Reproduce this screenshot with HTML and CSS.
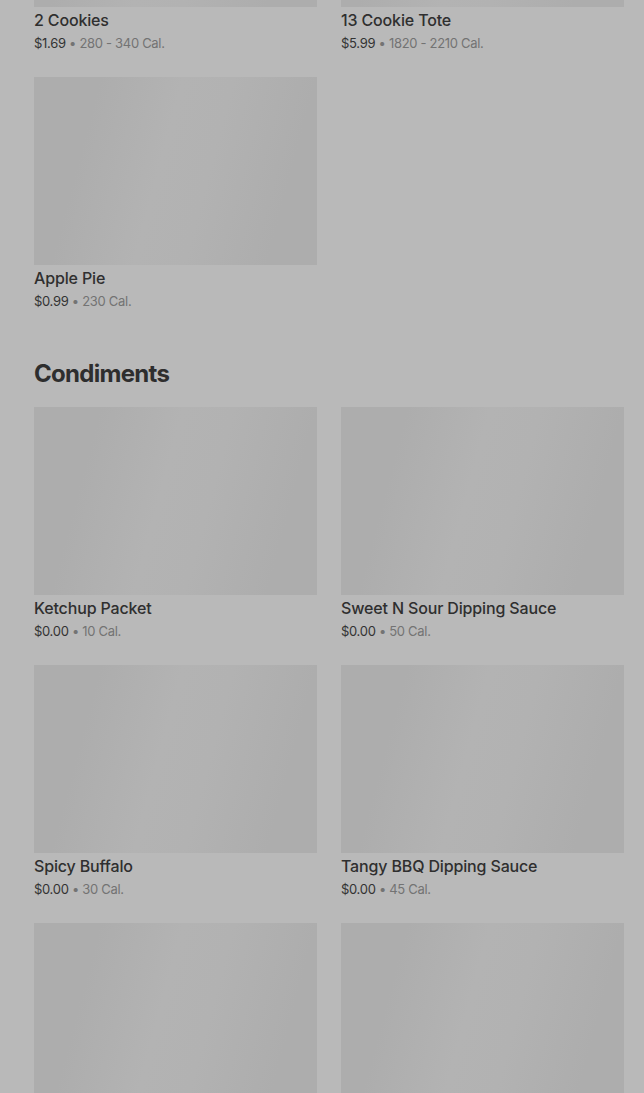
FILE: index.html
```html
<!DOCTYPE html>
<html lang="en">
<head>
    <meta charset="UTF-8">
    <meta name="viewport" content="width=device-width, initial-scale=1.0">
    <title>Menu</title>
    <link rel="stylesheet" href="styles.css">
</head>
<body>

    <div class="menu">
        <!-- デザート -->
        <section class="section">
            <div class="grid">
                <div class="item">
                    <div class="thumb"></div>
                    <div class="name">2 Cookies</div>
                    <div class="meta"><span class="price">$1.69</span> • 280 - 340 Cal.</div>
                </div>
                <div class="item">
                    <div class="thumb"></div>
                    <div class="name">13 Cookie Tote</div>
                    <div class="meta"><span class="price">$5.99</span> • 1820 - 2210 Cal.</div>
                </div>
                <div class="item">
                    <div class="thumb"></div>
                    <div class="name">Apple Pie</div>
                    <div class="meta"><span class="price">$0.99</span> • 230 Cal.</div>
                </div>
            </div>
        </section>

        <!-- 調味料 -->
        <section class="section">
            <h2>Condiments</h2>
            <div class="grid">
                <div class="item">
                    <div class="thumb"></div>
                    <div class="name">Ketchup Packet</div>
                    <div class="meta"><span class="price">$0.00</span> • 10 Cal.</div>
                </div>
                <div class="item">
                    <div class="thumb"></div>
                    <div class="name">Sweet N Sour Dipping Sauce</div>
                    <div class="meta"><span class="price">$0.00</span> • 50 Cal.</div>
                </div>
                <div class="item">
                    <div class="thumb"></div>
                    <div class="name">Spicy Buffalo</div>
                    <div class="meta"><span class="price">$0.00</span> • 30 Cal.</div>
                </div>
                <div class="item">
                    <div class="thumb"></div>
                    <div class="name">Tangy BBQ Dipping Sauce</div>
                    <div class="meta"><span class="price">$0.00</span> • 45 Cal.</div>
                </div>
                <div class="item">
                    <div class="thumb"></div>
                </div>
                <div class="item">
                    <div class="thumb"></div>
                </div>
            </div>
        </section>
    </div>

</body>
</html>
```

FILE: styles.css
```css
/* 暗いオーバーレイの下のメニュー */
body {
    font-family: 'Inter', 'Liberation Sans', sans-serif;
    margin: 0;
    padding: 0;
    background-color: #b9b9b9;
    color: #2f2f2f;
    overflow: hidden;
}

.menu {
    margin-top: -181px;
    padding: 0 20px 0 34px;
}

.section {
    margin-bottom: 47px;
}

h2 {
    font-size: 24px;
    line-height: 32px;
    font-weight: 700;
    letter-spacing: -0.7px;
    color: #2e2e2e;
    margin: 0 0 17px;
}

.grid {
    display: grid;
    grid-template-columns: 1fr 1fr;
    column-gap: 24px;
    row-gap: 24px;
}

.thumb {
    height: 188px;
    background-color: #adadad;
    background-image: linear-gradient(105deg, #adadad 20%, #b3b3b3 45%, #b2b2b2 60%, #adadad 85%);
}

.name {
    margin-top: 3px;
    font-size: 16px;
    line-height: 20px;
    font-weight: 500;
    letter-spacing: -0.15px;
    color: #2f2f2f;
}

.meta {
    margin-top: 3px;
    font-size: 13px;
    line-height: 20px;
    letter-spacing: -0.3px;
    color: #737373;
}

.price {
    color: #333;
}
```
